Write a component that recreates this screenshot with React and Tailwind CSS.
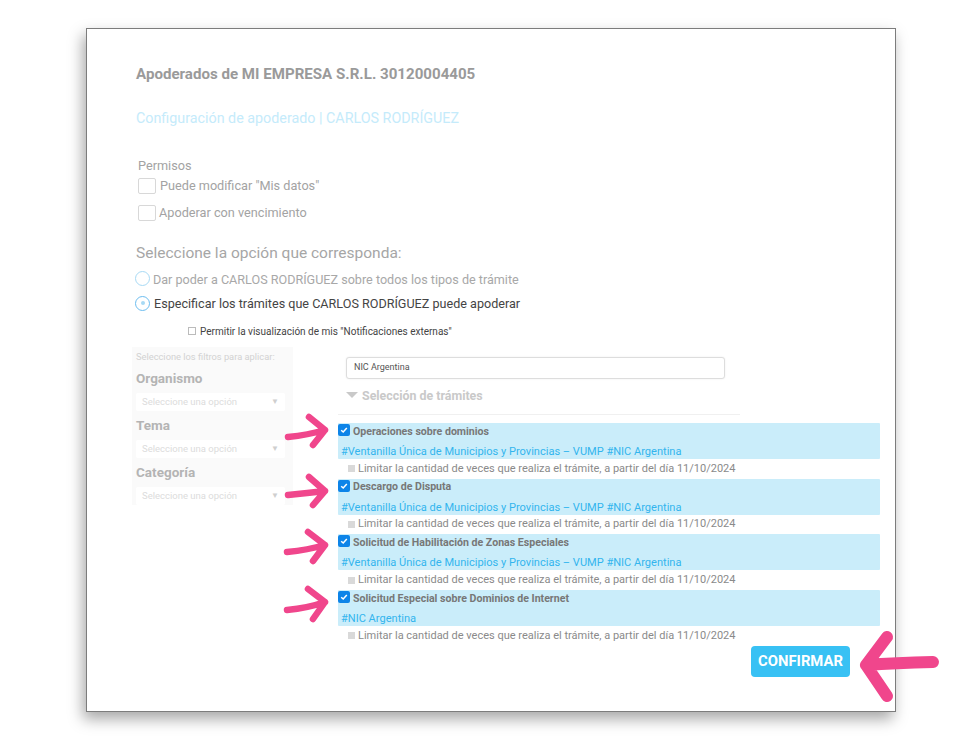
import React from 'react'

const LIMIT = 'Limitar la cantidad de veces que realiza el trámite, a partir del día 11/10/2024'
const VUMP = '#Ventanilla Única de Municipios y Provincias – VUMP #NIC Argentina'

const TRAMITES = [
  { title: 'Operaciones sobre dominios', tags: VUMP },
  { title: 'Descargo de Disputa', tags: VUMP },
  { title: 'Solicitud de Habilitación de Zonas Especiales', tags: VUMP },
  { title: 'Solicitud Especial sobre Dominios de Internet', tags: '#NIC Argentina' },
]

const FILTERS = ['Organismo', 'Tema', 'Categoría']

function Filter({ label }) {
  return (
    <div>
      <div className="text-[13.5px] leading-[20px] font-bold text-[#b4b4b4] mb-[5px]">{label}</div>
      <div className="w-[149px] h-[18px] bg-white rounded-[2px] flex items-center justify-between pl-[6px] pr-[6px] text-[9.5px] text-[#dcdcdc]">
        <span>Seleccione una opción</span>
        <span className="text-[#cfcfcf] text-[8px]">▼</span>
      </div>
    </div>
  )
}

function Tramite({ title, tags }) {
  return (
    <div>
      <div className="h-[36px] bg-[#caedfa] rounded-[1px]">
        <div className="flex items-center gap-[3px] h-[17px]">
          <span className="w-[12px] h-[12px] -mt-[3px] rounded-[2px] bg-[#0d84e8] flex items-center justify-center shrink-0">
            <svg width="8" height="8" viewBox="0 0 8 8"><path d="M1.2 4.2 3.2 6 6.8 2" fill="none" stroke="#fff" strokeWidth="1.5" /></svg>
          </span>
          <span className="text-[10.6px] font-bold text-[#777]">{title}</span>
        </div>
        <div className="pl-[3px] mt-[5px] text-[11.05px] leading-[14px] text-[#33b5ee]">{tags}</div>
      </div>
      <div className="h-[19.7px] flex items-center pl-[10px] gap-[3px] text-[#8a8a8a] text-[11px]">
        <span className="w-[7px] h-[7px] bg-[#d9d9d9] shrink-0" />
        <span>{LIMIT}</span>
      </div>
    </div>
  )
}

export default function App() {
  return (
    <div className="relative h-[743px] w-[980px] bg-white pt-[28px] pl-[86px] font-['Roboto',sans-serif]">
      <div className="w-[810px] h-[684px] border border-[#7c7c7c] bg-white shadow-[-3px_7px_14px_rgba(0,0,0,0.35)] pl-[49px] pt-[37px]">
        <h1 className="text-[15.1px] leading-[16px] font-bold text-[#9a9a9a]">Apoderados de MI EMPRESA S.R.L. 30120004405</h1>
        <h2 className="mt-[27px] text-[14.3px] leading-[18px] text-[#c5ebfb]">Configuración de apoderado | CARLOS RODRÍGUEZ</h2>

        <div className="mt-[31px] pl-[2px] text-[12.7px] text-[#a3a3a3]">
          <div className="leading-[16px]">Permisos</div>
          <div className="mt-[4px] flex items-center gap-[4px] h-[16px]">
            <span className="w-[18px] h-[16px] border border-[#d8d8d8] rounded-[2px]" />
            <span>Puede modificar "Mis datos"</span>
          </div>
          <div className="mt-[11px] flex items-center gap-[3px] h-[16px]">
            <span className="w-[18px] h-[16px] border border-[#d8d8d8] rounded-[2px]" />
            <span>Apoderar con vencimiento</span>
          </div>
        </div>

        <div className="mt-[22px] text-[15.5px] leading-[20px] text-[#a6a6a6]">Seleccione la opción que corresponda:</div>
        <div className="mt-[9px] -ml-[1px] flex items-center gap-[3px] h-[16px] text-[12.6px] text-[#a8a8a8]">
          <span className="w-[15px] h-[15px] -mt-[3px] rounded-full border border-[#a8daf5]" />
          <span>Dar poder a CARLOS RODRÍGUEZ sobre todos los tipos de trámite</span>
        </div>
        <div className="mt-[8px] -ml-[1px] flex items-center gap-[4px] h-[16px] text-[12.6px] text-[#444]">
          <span className="w-[15px] h-[15px] -mt-[2px] rounded-full border border-[#6cbdf0] flex items-center justify-center">
            <span className="w-[4px] h-[4px] rounded-full bg-[#a8daf5]" />
          </span>
          <span>Especificar los trámites que CARLOS RODRÍGUEZ puede apoderar</span>
        </div>
        <div className="mt-[12px] ml-[52px] flex items-center gap-[4px] h-[14px] text-[10px] text-[#444]">
          <span className="w-[8px] h-[8px] border border-[#bbb]" />
          <span>Permitir la visualización de mis "Notificaciones externas"</span>
        </div>

        <div className="flex mt-[12px] -ml-[4px]">
          <aside className="w-[161px] h-[158px] -mt-[3px] bg-[#fafafa] px-[4px] pt-[3px]">
            <div className="text-[9.3px] leading-[13px] text-[#d2d2d2] mb-[5px]">Seleccione los filtros para aplicar:</div>
            <div className="flex flex-col gap-[4px]">
              {FILTERS.map(f => <Filter key={f} label={f} />)}
            </div>
          </aside>

          <div className="ml-[45px] w-[542px]">
            <div className="ml-[8px] mt-[7px] w-[379px] h-[22px] border border-[#ddd] rounded-[3px] bg-white flex items-center pl-[7px] text-[9px] text-[#555] shadow-[0_0_2px_rgba(0,0,0,0.08)]">NIC Argentina</div>
            <div className="ml-[8px] mt-[8px] flex items-center gap-[4px] h-[18px] text-[12.4px] font-bold text-[#c9c9c9]">
              <span className="w-0 h-0 border-x-[6px] border-x-transparent border-t-[6px] border-t-[#c9c9c9] -mt-[2px]" />
              <span>Selección de trámites</span>
            </div>
            <div className="mt-[9px] mr-[140px] border-t border-[#f0f0f0]" />
            <div className="mt-[8px]">
              {TRAMITES.map(t => <Tramite key={t.title} {...t} />)}
            </div>
            <div className="flex justify-end mr-[30px]">
              <button className="w-[99px] h-[31px] rounded-[4px] bg-[#38c1f4] text-white text-[14.8px] font-bold">CONFIRMAR</button>
            </div>
          </div>
        </div>
      </div>

      {/* flechas rosas sobre la captura */}
      <svg className="absolute inset-0 pointer-events-none" width="980" height="743" viewBox="0 0 980 743" fill="none" stroke="#f0468c" strokeLinecap="round" strokeLinejoin="round">
        <g strokeWidth="6.5">
          <path d="M288 437 Q308 435 325 430 M309 417 L325 430 L313 445" />
          <path d="M288 495 Q308 493 325 491 M309 477 L325 491 L313 505" />
          <path d="M287 552 Q308 550 325 545 M308 532 L325 545 L313 561" />
          <path d="M287 610 Q308 608 325 602 M308 589 L325 602 L313 619" />
        </g>
        <path strokeWidth="12" d="M933 662 Q895 663 866 665 M887 637 L866 665 L887 696" />
      </svg>
    </div>
  )
}
